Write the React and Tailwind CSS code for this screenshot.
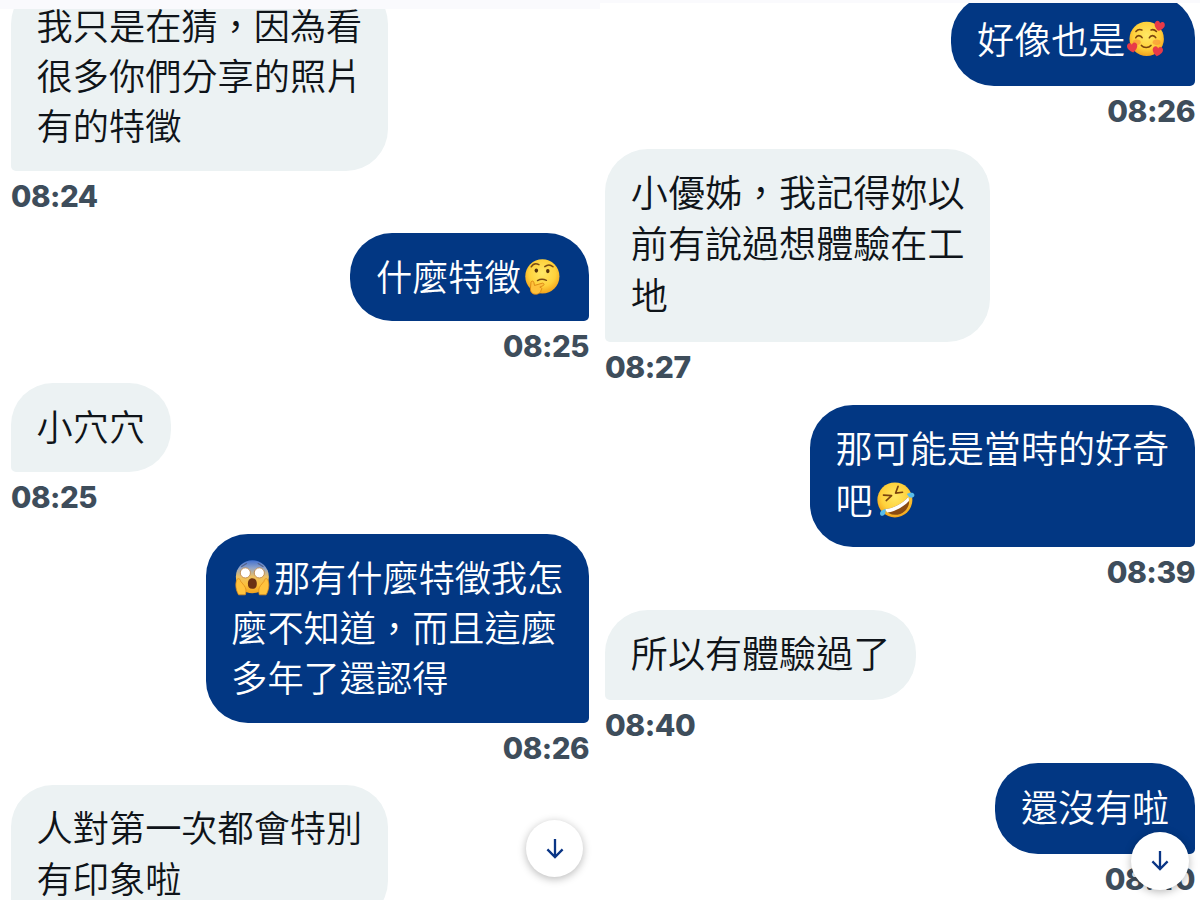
function Face({ id, top = "#ffe866", bottom = "#f2a21c", children }) {
  return (
    <svg viewBox="0 0 44 44" className="inline-block w-[1.18em] h-[1.18em] -my-2 align-[0.02em]">
      <defs>
        <radialGradient id={id} cx="0.5" cy="0.4" r="0.6">
          <stop offset="0" stopColor={top} />
          <stop offset="0.65" stopColor="#ffd13b" />
          <stop offset="1" stopColor={bottom} />
        </radialGradient>
      </defs>
      {children}
    </svg>
  );
}

const Thinking = () => (
  <Face id="thinking">
    <circle cx="22" cy="22" r="17.6" fill="url(#thinking)" />
    <path d="M10.5 12.2c2-3.2 5.2-3.8 8-2.2M24.5 12c2.8-2.3 6.2-2 8.5.2" fill="none" stroke="#7a4a12" strokeWidth="1.5" strokeLinecap="round" />
    <ellipse cx="15.8" cy="16" rx="1.8" ry="2.2" fill="#54300b" />
    <ellipse cx="27.6" cy="16.6" rx="1.8" ry="2.2" fill="#54300b" />
    <path d="M17 26.3c3-1.7 6-1.7 9.2-.2" fill="none" stroke="#7a4a12" strokeWidth="1.5" strokeLinecap="round" />
    <path d="M10.3 28.2c.2-1.8 2.8-1.8 3 .2l.6 3 7.8-2.3c2-.5 2.8 1.7 1 2.5l-3.3 1.5c2.3.3 2.4 2 1.2 3 .3 2.2-2.6 4.4-5.4 4.4-3.5 0-5.7-2.3-5.5-5.7z" fill="#ffc23c" stroke="#d98312" strokeWidth="0.9" />
  </Face>
);

const Scream = () => (
  <Face id="scream">
    <defs>
      <linearGradient id="scream-skin" x1="0" y1="0" x2="0" y2="1">
        <stop offset="0" stopColor="#3f6fd0" />
        <stop offset="0.24" stopColor="#91a4c8" />
        <stop offset="0.5" stopColor="#ecc063" />
        <stop offset="0.75" stopColor="#fbc13b" />
        <stop offset="1" stopColor="#f0a21f" />
      </linearGradient>
    </defs>
    <ellipse cx="22" cy="21.3" rx="17" ry="17" fill="url(#scream-skin)" />
    <path d="M11 10.8l5-3M33 10.8l-5-3" stroke="#53628a" strokeWidth="1.3" strokeLinecap="round" />
    <circle cx="14.8" cy="17.4" r="5.2" fill="#fff" stroke="#b97b34" strokeWidth="0.8" />
    <circle cx="29.2" cy="17.4" r="5.2" fill="#fff" stroke="#b97b34" strokeWidth="0.8" />
    <path d="M22 22.8c3.2 0 4.6 2.4 4.6 5.8s-1.4 5.2-4.6 5.2-4.6-1.8-4.6-5.2 1.4-5.8 4.6-5.8z" fill="#6b3113" />
    <path
      d="M6.3 24c1.7-1.5 3.4 0 3.6 2l3.7 4.5c2.2 2.8 2.2 6 1.2 9.5H7.8c-2.6-4.5-4-11-1.5-16zM37.7 24c-1.7-1.5-3.4 0-3.6 2l-3.7 4.5c-2.2 2.8-2.2 6-1.2 9.5h7c2.6-4.5 4-11 1.5-16z"
      fill="#ffc33d"
      stroke="#df8c1b"
      strokeWidth="0.8"
    />
  </Face>
);

const heart = "M0 5.3C-4 2.8-6.2-.4-4.7-3.1-3.4-5.2-1-4.9 0-2.6 1-4.9 3.4-5.2 4.7-3.1 6.2-.4 4 2.8 0 5.3z";

const Smitten = () => (
  <Face id="smitten">
    <circle cx="21.8" cy="22" r="17.3" fill="url(#smitten)" />
    <ellipse cx="11.8" cy="25.5" rx="4" ry="2.8" fill="#f79237" opacity="0.65" />
    <ellipse cx="31.8" cy="25.5" rx="4" ry="2.8" fill="#f79237" opacity="0.65" />
    <path
      d="M11 14.6c1.6-2 3.8-2.4 6-1.6M26.2 13c2-.8 4 0 5.4 1.6M10.8 20.8c1.2-2.8 5-2.8 6.4 0M24.5 20.8c1.2-2.8 5-2.8 6.4 0M16.5 28.6c2.2 2.7 7.4 2.7 9.6 0"
      fill="none"
      stroke="#7a430e"
      strokeWidth="1.6"
      strokeLinecap="round"
    />
    <path d={heart} transform="translate(34.6 8.8) rotate(14)" fill="#e83a48" />
    <path d={heart} transform="translate(7.4 30.5) rotate(-10)" fill="#e83a48" />
    <path d={heart} transform="translate(32.8 34.2) rotate(10)" fill="#e83a48" />
  </Face>
);

const Rofl = () => (
  <Face id="rofl">
    <circle cx="22" cy="22" r="17.6" fill="url(#rofl)" />
    <path d="M10.5 17.2l8.2.5-5.4 5M25.2 8.4l-2.5 6.8 7-.8" fill="none" stroke="#7a430e" strokeWidth="1.6" strokeLinecap="round" strokeLinejoin="round" />
    <path d="M11.8 31.5C20 30.4 30 25.6 35.6 18.8c2.6 7.4-1.5 14.8-8.2 17.3-6.2 2.3-12.6.4-15.6-4.6z" fill="#8a4b12" />
    <path d="M11.8 31.5C20 30.4 30 25.6 35.6 18.8c.5 1.4.7 3 .5 4.4-5.3 6-14 10.4-21.5 11.5-1.2-1-2.1-2-2.8-3.2z" fill="#fff" />
    <path d="M34 16.2c2.8-1.5 6.2-2 7.4.2 1 2.4-1.6 4-4 3.3-1.6-.5-2.4-2-3.4-3.5zM12.6 30.8c.5 3.2-.2 6.6-2.7 7.2-2.6.5-3.6-2.3-2.2-4.3 1-1.4 3-2 4.9-2.9z" fill="#58bdeb" />
  </Face>
);

const leftChat = [
  { time: "08:24", lines: ["我只是在猜，因為看", "很多你們分享的照片", "有的特徵"] },
  { mine: true, time: "08:25", lines: [<>什麼特徵<Thinking /></>] },
  { time: "08:25", lines: ["小穴穴"] },
  { mine: true, time: "08:26", lines: [<><Scream />那有什麼特徵我怎</>, "麼不知道，而且這麼", "多年了還認得"] },
  { lines: ["人對第一次都會特別", "有印象啦"] },
];

const rightChat = [
  { mine: true, time: "08:26", lines: [<>好像也是<Smitten /></>] },
  { time: "08:27", lines: ["小優姊，我記得妳以", "前有說過想體驗在工", "地"] },
  { mine: true, time: "08:39", lines: ["那可能是當時的好奇", <>吧<Rofl /></>] },
  { time: "08:40", lines: ["所以有體驗過了"] },
  { mine: true, time: "08:40", lines: ["還沒有啦"] },
];

function Message({ mine, time, lines, bubble, stamp }) {
  return (
    <div className={`flex flex-col ${mine ? "items-end" : "items-start"}`}>
      <div
        className={`${bubble} ${
          mine ? "bg-[#023783] text-white rounded-br-[5px]" : "bg-[#ecf2f3] text-[#0f1419] rounded-bl-[5px]"
        }`}
      >
        {lines.map((line, i) => (
          <div key={i} className="whitespace-nowrap">
            {line}
          </div>
        ))}
      </div>
      <div className={`${stamp} font-['Inter'] font-extrabold text-[#3e4d5b]`}>{time}</div>
    </div>
  );
}

function ScrollButton({ className }) {
  return (
    <button
      className={`absolute flex items-center justify-center rounded-full bg-white text-[#0a3585] shadow-[0_2px_8px_rgba(0,0,0,0.28)] ${className}`}
    >
      <svg viewBox="0 0 18 20" className="h-5 w-[18px]" fill="none" stroke="currentColor" strokeWidth="2.3">
        <path d="M9 0v18M1.4 10.4L9 18l7.6-7.6" />
      </svg>
    </button>
  );
}

export default function App() {
  return (
    <div
      lang="zh-TW"
      className="flex h-[900px] w-[1200px] overflow-hidden bg-white font-['Noto_Sans_CJK_TC',sans-serif] font-[350]"
    >
      <section className="relative flex w-[600px] flex-col">
        <div className="h-[9px] shrink-0 bg-[#fafafd]" />
        <div className="min-h-0 flex-1 overflow-hidden pl-[11px] pr-[11px]">
          <div className="-mt-[27px]">
            {leftChat.map((m, i) => (
              <Message
                key={i}
                {...m}
                bubble="rounded-[42px] px-[25.6px] pt-[16.8px] pb-[21.4px] text-[36.2px] leading-[50.3px]"
                stamp="h-[61.9px] text-[29.5px] leading-[51px] tracking-[-0.5px]"
              />
            ))}
          </div>
        </div>
        <ScrollButton className="left-[526px] top-[820px] h-[57px] w-[57px]" />
      </section>

      <section className="relative flex w-[600px] flex-col">
        <div className="h-[3px] shrink-0 bg-[#fafafd]" />
        <div className="min-h-0 flex-1 overflow-hidden pl-[5px] pr-[5px]">
          <div className="-mt-[8px]">
            {rightChat.map((m, i) => (
              <Message
                key={i}
                {...m}
                bubble="rounded-[43px] px-[25.8px] pt-[17.5px] pb-[21.8px] text-[37.1px] leading-[51.4px]"
                stamp="h-[62.8px] text-[30px] leading-[51px] tracking-[-0.5px]"
              />
            ))}
          </div>
        </div>
        <ScrollButton className="left-[531px] top-[832px] h-[58px] w-[58px]" />
      </section>
    </div>
  );
}
